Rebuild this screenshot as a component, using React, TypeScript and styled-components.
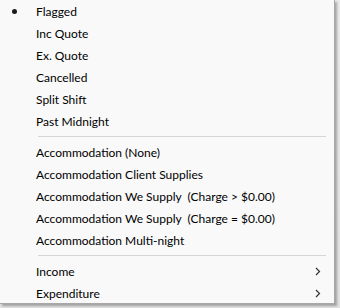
import styled, { createGlobalStyle } from "styled-components";

const GlobalStyle = createGlobalStyle`
  html, body {
    margin: 0;
    padding: 0;
    background: #e4e4e4;
  }
  body {
    width: 340px;
    height: 308px;
    overflow: hidden;
    font-family: Lato, "Noto Sans", sans-serif;
  }
`;

const Stage = styled.div`
  position: relative;
  width: 340px;
  height: 308px;
  background: linear-gradient(to bottom, #e9e9e9, #e1e1e1);
`;

const Menu = styled.div`
  position: absolute;
  top: 0;
  left: 0;
  width: 334px;
  height: 303px;
  background: #f9f9f9;
  border-right: 1px solid #a8a8a8;
  border-bottom: 1px solid #a8a8a8;
  box-shadow: 2px 2px 2px rgba(0, 0, 0, 0.28);
  display: flex;
  flex-direction: column;
`;

const Item = styled.div`
  position: relative;
  height: 22px;
  display: flex;
  align-items: center;
  padding-left: 36px;
  padding-right: 13px;
  font-size: 12px;
  color: #000;
  white-space: pre;
`;

const Label = styled.span`
  flex: 1;
`;

const Bullet = styled.span`
  position: absolute;
  left: 12px;
  top: 9px;
  width: 5px;
  height: 5px;
  border-radius: 50%;
  background: #1a1a1a;
`;

const Separator = styled.div`
  height: 1px;
  margin: 4px 8px 4px 38px;
  background: #d6d6d6;
`;

const Chevron = () => (
  <svg width="6" height="9" viewBox="0 0 6 9">
    <polyline points="1,1 4.5,4.5 1,8" fill="none" stroke="#333" strokeWidth="1.2" />
  </svg>
);

type Entry = { label: string; checked?: boolean; sub?: boolean };

const groups: Entry[][] = [
  [
    { label: "Flagged", checked: true },
    { label: "Inc Quote" },
    { label: "Ex. Quote" },
    { label: "Cancelled" },
    { label: "Split Shift" },
    { label: "Past Midnight" },
  ],
  [
    { label: "Accommodation (None)" },
    { label: "Accommodation Client Supplies" },
    { label: "Accommodation We Supply  (Charge > $0.00)" },
    { label: "Accommodation We Supply  (Charge = $0.00)" },
    { label: "Accommodation Multi-night" },
  ],
  [
    { label: "Income", sub: true },
    { label: "Expenditure", sub: true },
  ],
];

export default function App() {
  return (
    <>
      <GlobalStyle />
      <Stage>
        <Menu>
          {groups.map((group, gi) => (
            <div key={gi}>
              {gi > 0 && <Separator />}
              {group.map((entry) => (
                <Item key={entry.label}>
                  {entry.checked && <Bullet />}
                  <Label>{entry.label}</Label>
                  {entry.sub && <Chevron />}
                </Item>
              ))}
            </div>
          ))}
        </Menu>
      </Stage>
    </>
  );
}
